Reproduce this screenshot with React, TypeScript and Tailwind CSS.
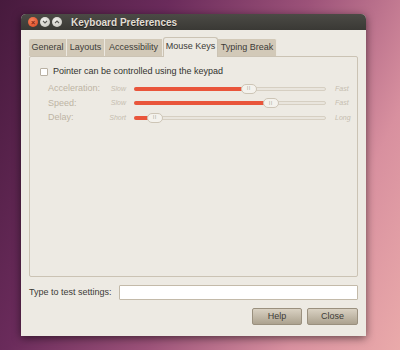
import { useState } from "react";

const font = "font-['Liberation_Sans',Arial,sans-serif]";

interface SliderRowProps {
  label: string;
  low: string;
  high: string;
  value: number;
}

function SliderRow({ label, low, high, value }: SliderRowProps) {
  const fill = Math.round(value * 176);
  return (
    <div className="flex h-[14.5px] items-center">
      <span className="w-[55px] text-[9px] text-[#bdb4a4]">{label}</span>
      <span className="w-[23px] text-right text-[7px] italic text-[#c5bdaf]">{low}</span>
      <div className="relative ml-[8px] h-[4px] w-[192px] rounded-full border border-[#d6cfc2] bg-[#e9e5dd]">
        <div className="absolute -left-px -top-px h-[4px] rounded-l-full bg-[#e9553b]" style={{ width: fill + 2 }} />
        <div
          className="absolute top-[-4px] flex h-[10px] w-[16px] items-center justify-center rounded-[5px] border border-[#cdc5b6] bg-[#f4f2ed]"
          style={{ left: fill }}
        >
          <span className="text-[5px] leading-none tracking-[1px] text-[#a69d8e]">ll</span>
        </div>
      </div>
      <span className="ml-[9px] text-[7px] italic text-[#c5bdaf]">{high}</span>
    </div>
  );
}

const tabs = [
  { name: "General", w: "w-[38px]" },
  { name: "Layouts", w: "w-[38px]" },
  { name: "Accessibility", w: "w-[58px]" },
  { name: "Mouse Keys", w: "w-[55px]" },
  { name: "Typing Break", w: "w-[59px]" },
];

export default function App() {
  const [active, setActive] = useState("Mouse Keys");
  const [checked, setChecked] = useState(false);

  return (
    <div
      className={`${font} h-[350px] w-[400px] overflow-hidden bg-[linear-gradient(115deg,#471a3d_0%,#6a2b5b_30%,#9c5279_55%,#d8909f_80%,#eaaaaa_100%)] pl-[21px] pt-[14px]`}
    >
      <div className="flex h-[322px] w-[345px] flex-col overflow-hidden rounded-t-[5px] bg-[#edeae3] shadow-[0_2px_8px_rgba(0,0,0,0.55)]">
        {/* title bar */}
        <div className="flex h-[16px] items-center bg-[linear-gradient(#4b4a45,#3a3935)] pl-[7px]">
          <div className="flex items-center gap-[2px]">
            <span className="flex h-[10px] w-[10px] items-center justify-center rounded-full bg-[radial-gradient(circle_at_40%_35%,#f4845e,#d9441f)] text-[7px] font-bold leading-none text-[#7a2410]">
              ×
            </span>
            <span className="flex h-[10px] w-[10px] items-center justify-center rounded-full bg-[radial-gradient(circle_at_40%_35%,#f2f1ee,#bebcb5)]">
              <svg width="6" height="4" viewBox="0 0 6 4">
                <path d="M1 1l2 2 2-2" stroke="#5a5955" strokeWidth="1.1" fill="none" />
              </svg>
            </span>
            <span className="flex h-[10px] w-[10px] items-center justify-center rounded-full bg-[radial-gradient(circle_at_40%_35%,#f2f1ee,#bebcb5)]">
              <svg width="6" height="4" viewBox="0 0 6 4">
                <path d="M1 3l2-2 2 2" stroke="#5a5955" strokeWidth="1.1" fill="none" />
              </svg>
            </span>
          </div>
          <span className="ml-[9px] text-[10px] font-bold text-[#e2ded4] [text-shadow:0_1px_0_#222]">
            Keyboard Preferences
          </span>
        </div>

        {/* body */}
        <div className="flex flex-1 flex-col px-[8px] pt-[7px]">
          <div className="flex h-[19px] items-end">
            {tabs.map((t) => {
              const on = t.name === active;
              return (
                <button
                  key={t.name}
                  onClick={() => setActive(t.name)}
                  className={
                    on
                      ? `${t.w} relative z-10 -mb-px flex h-[20px] items-center justify-center rounded-t-[3px] border border-b-0 border-[#cbc3b4] bg-[#edeae3] pb-[2px] text-[9px] text-[#3c3b37]`
                      : `${t.w} flex h-[17px] items-center justify-center border-r border-[#ece8e0] bg-[#d2c9b8] text-[9px] text-[#3c3b37] first:rounded-tl-[2px] last:rounded-tr-[2px]`
                  }
                >
                  {t.name}
                </button>
              );
            })}
          </div>

          <div className="h-[221px] rounded-[2px] border border-[#cbc3b4] bg-[#edeae3] pl-[10px] pt-[8px]">
            <label className="flex items-center gap-[5px]">
              <input
                type="checkbox"
                checked={checked}
                onChange={(e) => setChecked(e.target.checked)}
                className="h-[8px] w-[8px] appearance-none rounded-[1px] border border-[#b9b1a3] bg-white"
              />
              <span className="text-[9px] text-[#33322e]">Pointer can be controlled using the keypad</span>
            </label>
            <div className="mt-[3px] pl-[8px]">
              <SliderRow label="Acceleration:" low="Slow" high="Fast" value={0.6} />
              <SliderRow label="Speed:" low="Slow" high="Fast" value={0.73} />
              <SliderRow label="Delay:" low="Short" high="Long" value={0.07} />
            </div>
          </div>

          <div className="mt-[8px] flex h-[15px] items-center">
            <span className="w-[90px] text-[9px] text-[#3c3b37]">Type to test settings:</span>
            <input className="h-[15px] flex-1 rounded-[1px] border border-[#c3baa9] bg-white px-1 text-[9px] outline-none" />
          </div>

          <div className="mt-[8px] flex justify-end gap-[5px]">
            <button className="h-[17px] w-[50px] rounded-[2px] border border-[#9a907e] bg-[linear-gradient(#d9d1c2,#aca28f)] text-[9px] text-[#3c3b37]">
              Help
            </button>
            <button className="h-[17px] w-[51px] rounded-[2px] border border-[#9a907e] bg-[linear-gradient(#d9d1c2,#aca28f)] text-[9px] text-[#3c3b37]">
              Close
            </button>
          </div>
        </div>
      </div>
    </div>
  );
}
